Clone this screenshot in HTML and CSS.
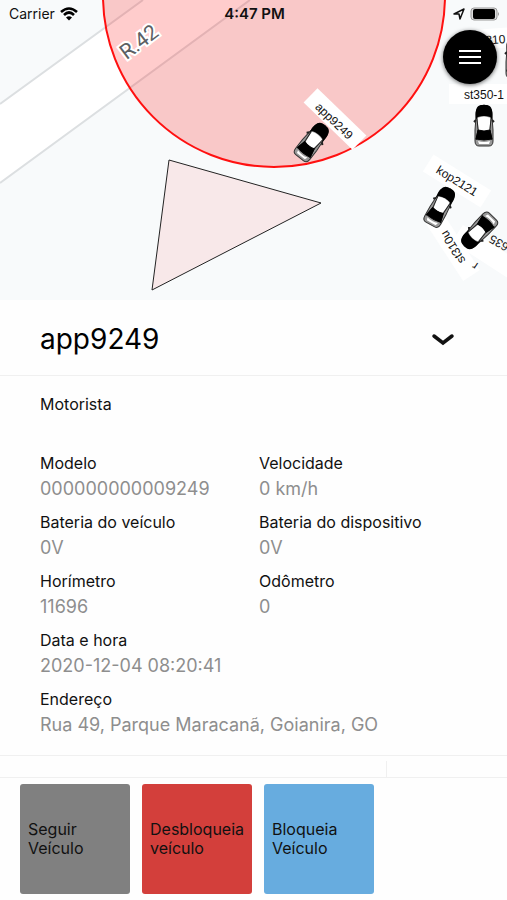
FILE: index.html
```html
<!DOCTYPE html>
<html lang="pt-BR">
<head>
<meta charset="utf-8">
<meta name="viewport" content="width=device-width, initial-scale=1">
<title>app9249</title>
<link rel="stylesheet" href="styles.css">
</head>
<body>
<main class="screen">
  <section class="map">
    <svg class="map-canvas" viewBox="0 0 507 300" preserveAspectRatio="xMidYMid slice" role="img" aria-label="Mapa">
      <defs>
        <g id="car">
          <path d="M-8-9Q-9-20 0-21Q9-20 8-9L9 4V15Q9 20 5 20H-5Q-9 20-9 15V4Z" fill="#999" stroke="#333" stroke-width="1"/>
          <path d="M-8-6Q-10-20-3-21H3Q10-20 8-6L6-9Q0-11-6-9Z" fill="#000"/>
          <path d="M-8-6-10-4M8-6 10-4" stroke="#222" stroke-width="2"/>
          <path d="M-7-8Q0-11 7-8L5 4Q0 6-5 4Z" fill="#fff"/>
          <path d="M-7-8-6 4-8 14M7-8 6 4 8 14" fill="none" stroke="#222" stroke-width="1"/>
          <path d="M-6 4Q0 6 6 4L8 13Q0 15-8 13Z" fill="#000" stroke="#000" stroke-width="1"/>
          <path d="M-6 15Q0 17 6 15L5 18H-5Z" fill="#fff"/>
        </g>
      </defs>
      <rect width="507" height="300" fill="#f8fafb"/>
      <path d="M0 104 143 0H250L0 183Z" fill="#fff"/>
      <path d="M0 104 143 0M0 183 250 0" fill="none" stroke="#dcdfe1" stroke-width="2"/>
      <circle cx="274" cy="-4" r="171" fill="#ff0000" fill-opacity=".2" stroke="#ff1010" stroke-width="2"/>
      <path d="M169 160 321 203 152 290Z" fill="#ff0000" fill-opacity=".07" stroke="#222" stroke-width="1"/>
      <text class="street" transform="translate(139 42) rotate(-37)" y="7">R.42</text>

      <g class="tags">
        <rect x="480" y="28" width="40" height="20" transform="rotate(-4 500 38)"/>
        <rect x="449" y="84" width="70" height="20"/>
        <rect x="-34" y="-10" width="68" height="20" transform="translate(335 119) rotate(44)"/>
        <rect x="-34" y="-10" width="68" height="20" transform="translate(457 181) rotate(32)"/>
        <rect x="-34" y="-10" width="68" height="20" transform="translate(453 247) rotate(57)"/>
        <rect x="-34" y="-10" width="68" height="20" transform="translate(486 252) rotate(33)"/>
      </g>
      <g class="tag-text">
        <text transform="translate(491 44) rotate(-4)">st310</text>
        <text x="484" y="99">st350-1</text>
        <text transform="translate(334 121) rotate(44)" y="4">app9249</text>
        <text transform="translate(457 181) rotate(32)" y="4">kop2121</text>
        <text transform="translate(453 247) rotate(239)" y="4">st310u</text>
        <text transform="translate(499 243) rotate(210)" y="4">635</text>
        <text transform="translate(475 266) rotate(213)" y="4">r</text>
      </g>
      <use href="#car" transform="translate(484 126)"/>
      <use href="#car" transform="translate(312 142) rotate(38)"/>
      <use href="#car" transform="translate(440 207) rotate(29)"/>
      <use href="#car" transform="translate(479 231) rotate(224)"/>
      <use href="#car" transform="translate(515 58)"/>
    </svg>

    <header class="status">
      <div class="status-left">
        <span>Carrier</span>
        <svg width="18" height="14" viewBox="0 0 18 14" aria-hidden="true">
          <path d="M1 5Q9-2 17 5M4 8Q9 3 14 8" fill="none" stroke="#000" stroke-width="2.600"/>
          <path d="M6 10.500Q9 8 12 10.500L9 13.500Z"/>
        </svg>
      </div>
      <time class="clock">4:47 PM</time>
      <div class="status-right">
        <svg width="12" height="12" viewBox="0 0 12 12" aria-hidden="true">
          <path d="M1 6 11 1 7 11 6 6Z" fill="none" stroke="#111" stroke-width="1.500" stroke-linejoin="round"/>
        </svg>
        <svg width="30" height="14" viewBox="0 0 30 14" aria-hidden="true">
          <rect x="1" y="1" width="26" height="12" rx="3" fill="#ddd" stroke="#999" stroke-width="1"/>
          <rect x="3" y="2" width="22" height="10" rx="2"/>
          <path d="M28 5Q30 7 28 9Z" fill="#999"/>
        </svg>
      </div>
    </header>

    <button class="menu" type="button" aria-label="Menu">
      <svg width="24" height="16" viewBox="0 0 24 16" aria-hidden="true">
        <path d="M1 2H23M1 8H23M1 14H23" stroke="#fff" stroke-width="2"/>
      </svg>
    </button>
  </section>

  <section class="title-bar">
    <h1>app9249</h1>
    <button class="collapse" type="button" aria-label="Recolher">
      <svg width="24" height="14" viewBox="0 0 24 14" aria-hidden="true">
        <path d="M3 4 12 11 21 4" fill="none" stroke="#111" stroke-width="3.500" stroke-linecap="round"/>
      </svg>
    </button>
  </section>

  <dl class="details">
    <div class="wide"><dt>Motorista</dt><dd></dd></div>
    <div><dt>Modelo</dt><dd>000000000009249</dd></div>
    <div><dt>Velocidade</dt><dd>0 km/h</dd></div>
    <div><dt>Bateria do veículo</dt><dd>0V</dd></div>
    <div><dt>Bateria do dispositivo</dt><dd>0V</dd></div>
    <div><dt>Horímetro</dt><dd>11696</dd></div>
    <div><dt>Odômetro</dt><dd>0</dd></div>
    <div class="wide"><dt>Data e hora</dt><dd>2020-12-04 08:20:41</dd></div>
    <div class="wide"><dt>Endereço</dt><dd>Rua 49, Parque Maracanã, Goianira, GO</dd></div>
  </dl>

  <div class="strip"><span class="strip-main"></span><span class="strip-side"></span></div>

  <nav class="actions">
    <button class="action follow" type="button">Seguir Veículo</button>
    <button class="action unlock" type="button">Desbloqueia veículo</button>
    <button class="action lock" type="button">Bloqueia Veículo</button>
  </nav>
</main>
</body>
</html>
```
FILE: styles.css
```css
* {
  box-sizing: border-box;
}

body {
  margin: 0;
  background: #fefefe;
  color: #111;
  font-family: Inter, "Liberation Sans", sans-serif;
  font-size: 16px;
}

button {
  border: 0;
  padding: 0;
  background: none;
  color: inherit;
  font: inherit;
}

svg {
  display: block;
}

.map {
  position: relative;
  height: 300px;
  overflow: hidden;
}

.map-canvas {
  width: 100%;
  height: 100%;
}

.street {
  fill: #5c6064;
  stroke: #fff;
  stroke-width: 4px;
  paint-order: stroke;
  font: 400 21px Roboto, sans-serif;
  text-anchor: middle;
}

.tags {
  fill: #fff;
}

.tag-text {
  fill: #111;
  font: 12px "Liberation Sans", sans-serif;
  text-anchor: middle;
}

.status {
  position: absolute;
  top: 0;
  left: 0;
  right: 0;
  display: grid;
  grid-template-columns: 1fr auto 1fr;
  align-items: center;
  height: 27px;
  padding: 0 7px 0 9px;
  font-size: 14px;
}

.status-left,
.status-right {
  display: flex;
  align-items: center;
  gap: 5px;
}

.status-right {
  justify-content: flex-end;
}

.clock {
  font-size: 15px;
  font-weight: 600;
}

.menu {
  position: absolute;
  top: 30px;
  right: 10px;
  display: grid;
  place-items: center;
  width: 54px;
  height: 54px;
  border-radius: 50%;
  background: #000;
  box-shadow: 0 1px 4px rgba(0, 0, 0, 0.6);
}

.title-bar {
  display: flex;
  align-items: center;
  justify-content: space-between;
  height: 76px;
  padding: 2px 52px 0 40px;
  border-bottom: 1px solid #f0f0f0;
}

h1 {
  margin: 0;
  color: #000;
  font-size: 28px;
  font-weight: 400;
}

.details {
  display: grid;
  grid-template-columns: 1fr 1fr;
  grid-auto-rows: 59px;
  margin: 0;
  padding: 15px 29px 10px 40px;
}

.details .wide {
  grid-column: 1 / -1;
}

dt {
  line-height: 26px;
}

dd {
  margin: 0;
  color: #8e8e8e;
  font-size: 18px;
  line-height: 26px;
}

.strip {
  display: flex;
  height: 23px;
  padding-top: 5px;
  border-top: 1px solid #f0f0f0;
  border-bottom: 1px solid #f0f0f0;
}

.strip-main {
  width: 387px;
  border-right: 1px solid #f0f0f0;
}

.actions {
  display: flex;
  gap: 12px;
  padding: 6px 20px;
}

.action {
  width: 110px;
  height: 110px;
  padding: 0 8px;
  border-radius: 3px;
  line-height: 19px;
  text-align: left;
}

.follow {
  background: #808080;
}

.unlock {
  background: #d33f3b;
}

.lock {
  background: #67acdf;
}
```
